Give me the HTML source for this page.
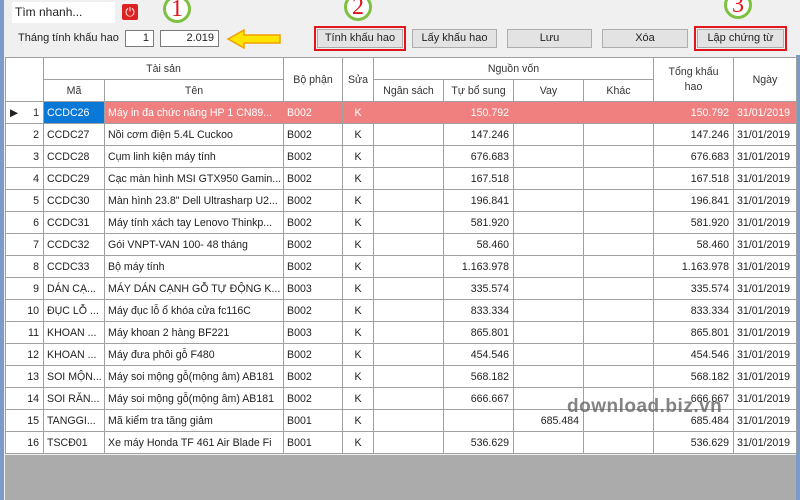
<!DOCTYPE html>
<html><head><meta charset="utf-8"><style>
body{margin:0;width:800px;height:500px;overflow:hidden;background:#f0f0f0;font-family:"Liberation Sans",Arial,sans-serif;font-size:11px;color:#222;position:relative}
.a{position:absolute}
.btn{position:absolute;top:29px;height:19px;background:#e3e3e3;border:1px solid #adadad;box-sizing:border-box;text-align:center;line-height:17px;font-size:11px}
.red{outline:2px solid #e0161d;outline-offset:1px}
.inp{position:absolute;top:30px;height:17px;background:#fff;border:1px solid #7a7a7a;box-sizing:border-box;text-align:right;padding-right:4px;line-height:15px}
.circ{position:absolute;width:28px;height:28px;border:3px solid #7dc142;border-radius:50%;box-sizing:border-box;text-align:center;font-family:"Liberation Serif",serif;color:#e0161d;font-size:24px;line-height:23px;background:#fff}
table{position:absolute;left:5px;top:57px;width:791px;border-collapse:collapse;table-layout:fixed;background:#fff}
td{border:1px solid #a0a0a0;height:21px;padding:0;text-indent:3px;white-space:nowrap;overflow:hidden;font-size:10.6px}
td.h{text-align:center;color:#333;text-indent:0}
td.n{text-align:right;text-indent:0}
td.n::after,td.rh::after{content:"";display:inline-block;width:4px}
td.c{text-align:center;text-indent:0}
td.rh{text-align:right;background:#fff;text-indent:0}
tr.sel td{background:#f08080;color:#fff}
tr.sel td.rh{background:#fff;color:#222}
tr.sel td.m{background:#0a78d7;color:#fff}
</style></head><body>
<div class="a" style="left:0;top:0;width:4px;height:500px;background:#7a9cc6"></div>
<div class="a" style="left:796px;top:55px;width:4px;height:445px;background:#7a9cc6"></div>
<div class="a" style="left:12px;top:2px;width:100px;height:21px;background:#fff;font-size:12px;line-height:21px;padding-left:3px">Tìm nhanh...</div>
<div class="a" style="left:122px;top:4px;width:16px;height:16px;background:#d22;border-radius:2px;color:#fff;text-align:center;line-height:16px;font-size:12px">⏻</div>
<div class="a" style="left:18px;top:32px;font-size:11px">Tháng tính khấu hao</div>
<div class="inp" style="left:125px;width:29px">1</div>
<div class="inp" style="left:160px;width:59px">2.019</div>
<svg class="a" style="left:226px;top:28px" width="56" height="22"><path d="M2 11 L18 2 L18 7 L54 7 L54 15 L18 15 L18 20 Z" fill="#ffe400" stroke="#f0a000" stroke-width="1.5"/></svg>
<div class="circ" style="left:163px;top:-5px">1</div>
<div class="circ" style="left:344px;top:-7px">2</div>
<div class="circ" style="left:724px;top:-9px">3</div>
<div class="btn red" style="left:317px;width:86px">Tính khấu hao</div>
<div class="btn" style="left:412px;width:85px">Lấy khấu hao</div>
<div class="btn" style="left:507px;width:85px">Lưu</div>
<div class="btn" style="left:602px;width:86px">Xóa</div>
<div class="btn red" style="left:697px;width:87px">Lập chứng từ</div>
<div class="a" style="left:5px;top:455px;width:791px;height:45px;background:#ababab"></div>
<table>
<colgroup><col style="width:38px"><col style="width:61px"><col style="width:179px"><col style="width:59px"><col style="width:31px"><col style="width:70px"><col style="width:70px"><col style="width:70px"><col style="width:70px"><col style="width:80px"><col style="width:63px"></colgroup>
<tr><td rowspan="2"></td><td class="h" colspan="2">Tài sản</td><td class="h" rowspan="2">Bộ phận</td><td class="h" rowspan="2">Sửa</td><td class="h" colspan="4">Nguồn vốn</td><td class="h" rowspan="2" style="white-space:normal;line-height:15px">Tổng khấu<br>hao</td><td class="h" rowspan="2">Ngày</td></tr>
<tr><td class="h">Mã</td><td class="h">Tên</td><td class="h">Ngân sách</td><td class="h">Tự bổ sung</td><td class="h">Vay</td><td class="h">Khác</td></tr>
<tr class="sel"><td class="rh"><span style="float:left;margin-left:4px">▶</span>1</td><td class="m">CCDC26</td><td>Máy in đa chức năng HP 1 CN89...</td><td>B002</td><td class="c">K</td><td></td><td class="n">150.792</td><td></td><td></td><td class="n">150.792</td><td>31/01/2019</td></tr>
<tr><td class="rh">2</td><td>CCDC27</td><td>Nồi cơm điện 5.4L Cuckoo</td><td>B002</td><td class="c">K</td><td></td><td class="n">147.246</td><td></td><td></td><td class="n">147.246</td><td>31/01/2019</td></tr>
<tr><td class="rh">3</td><td>CCDC28</td><td>Cụm linh kiện máy tính</td><td>B002</td><td class="c">K</td><td></td><td class="n">676.683</td><td></td><td></td><td class="n">676.683</td><td>31/01/2019</td></tr>
<tr><td class="rh">4</td><td>CCDC29</td><td>Cạc màn hình MSI GTX950 Gamin...</td><td>B002</td><td class="c">K</td><td></td><td class="n">167.518</td><td></td><td></td><td class="n">167.518</td><td>31/01/2019</td></tr>
<tr><td class="rh">5</td><td>CCDC30</td><td>Màn hình 23.8" Dell Ultrasharp U2...</td><td>B002</td><td class="c">K</td><td></td><td class="n">196.841</td><td></td><td></td><td class="n">196.841</td><td>31/01/2019</td></tr>
<tr><td class="rh">6</td><td>CCDC31</td><td>Máy tính xách tay Lenovo Thinkp...</td><td>B002</td><td class="c">K</td><td></td><td class="n">581.920</td><td></td><td></td><td class="n">581.920</td><td>31/01/2019</td></tr>
<tr><td class="rh">7</td><td>CCDC32</td><td>Gói VNPT-VAN 100- 48 tháng</td><td>B002</td><td class="c">K</td><td></td><td class="n">58.460</td><td></td><td></td><td class="n">58.460</td><td>31/01/2019</td></tr>
<tr><td class="rh">8</td><td>CCDC33</td><td>Bộ máy tính</td><td>B002</td><td class="c">K</td><td></td><td class="n">1.163.978</td><td></td><td></td><td class="n">1.163.978</td><td>31/01/2019</td></tr>
<tr><td class="rh">9</td><td>DÁN CẠ...</td><td>MÁY DÁN CẠNH GỖ TỰ ĐỘNG K...</td><td>B003</td><td class="c">K</td><td></td><td class="n">335.574</td><td></td><td></td><td class="n">335.574</td><td>31/01/2019</td></tr>
<tr><td class="rh">10</td><td>ĐỤC LỖ ...</td><td>Máy đục lỗ ổ khóa cửa fc116C</td><td>B002</td><td class="c">K</td><td></td><td class="n">833.334</td><td></td><td></td><td class="n">833.334</td><td>31/01/2019</td></tr>
<tr><td class="rh">11</td><td>KHOAN ...</td><td>Máy khoan 2 hàng BF221</td><td>B003</td><td class="c">K</td><td></td><td class="n">865.801</td><td></td><td></td><td class="n">865.801</td><td>31/01/2019</td></tr>
<tr><td class="rh">12</td><td>KHOAN ...</td><td>Máy đưa phôi gỗ F480</td><td>B002</td><td class="c">K</td><td></td><td class="n">454.546</td><td></td><td></td><td class="n">454.546</td><td>31/01/2019</td></tr>
<tr><td class="rh">13</td><td>SOI MỘN...</td><td>Máy soi mộng gỗ(mộng âm) AB181</td><td>B002</td><td class="c">K</td><td></td><td class="n">568.182</td><td></td><td></td><td class="n">568.182</td><td>31/01/2019</td></tr>
<tr><td class="rh">14</td><td>SOI RĂN...</td><td>Máy soi mộng gỗ(mộng âm) AB181</td><td>B002</td><td class="c">K</td><td></td><td class="n">666.667</td><td></td><td></td><td class="n">666.667</td><td>31/01/2019</td></tr>
<tr><td class="rh">15</td><td>TANGGI...</td><td>Mã kiểm tra tăng giảm</td><td>B001</td><td class="c">K</td><td></td><td></td><td class="n">685.484</td><td></td><td class="n">685.484</td><td>31/01/2019</td></tr>
<tr><td class="rh">16</td><td>TSCĐ01</td><td>Xe máy Honda TF 461 Air Blade Fi</td><td>B001</td><td class="c">K</td><td></td><td class="n">536.629</td><td></td><td></td><td class="n">536.629</td><td>31/01/2019</td></tr>
</table>
<div class="a" style="left:567px;top:396px;font-size:19px;font-weight:bold;color:rgba(90,90,90,0.75);letter-spacing:0.5px">download.biz.vn</div>
</body></html>
